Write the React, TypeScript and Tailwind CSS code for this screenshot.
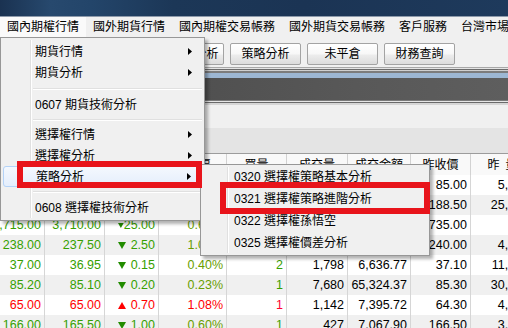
import React from "react";

const menus = ["國內期權行情", "國外期貨行情", "國內期權交易帳務", "國外期貨交易帳務", "客戶服務", "台灣市場"];

const widths = ["w-[45px]", "w-[60px]", "w-[54px]", "w-[68px]", "w-[60px]", "w-[61px]", "w-[63px]", "w-[60px]", "w-[62px]"];
const headers = ["買價", "賣價", "漲跌", "漲跌幅", "買量", "成交量", "成交金額", "昨收價", ""];

type Row = { c: string[]; up: boolean; qUp: boolean };
const rows: Row[] = [
  { c: ["84.90", "84.80", "0.10", "0.12%", "3", "2,311", "19,611.42", "85.00", "5,862"], up: false, qUp: false },
  { c: ["188.00", "187.50", "0.50", "0.27%", "1", "985", "18,512.30", "188.50", "25,417"], up: false, qUp: false },
  { c: ["3,715.00", "3,710.00", "25.00", "0.67%", "1", "312", "11,602.73", "3,735.00", ""], up: false, qUp: false },
  { c: ["238.00", "237.50", "2.50", "1.04%", "2", "530", "12,611.95", "240.00", "4,310"], up: false, qUp: false },
  { c: ["37.00", "36.95", "0.15", "0.40%", "2", "1,798", "6,636.77", "37.10", "11,526"], up: false, qUp: false },
  { c: ["85.20", "85.10", "0.20", "0.23%", "1", "7,680", "65,324.37", "85.30", "30,884"], up: false, qUp: false },
  { c: ["65.00", "65.00", "0.70", "1.08%", "1", "1,142", "7,395.72", "64.30", "4,205"], up: true, qUp: true },
  { c: ["166.00", "165.50", "1.00", "0.60%", "1", "427", "7,067.90", "166.50", "3,164"], up: false, qUp: false },
];

function Arrow() {
  return (
    <svg width="5" height="7" viewBox="0 0 5 7" className="ml-auto mr-[9px]">
      <polygon points="0,0 4,3.5 0,7" fill="#000" />
    </svg>
  );
}

function MenuItem({ label, arrow, hot }: { label: string; arrow?: boolean; hot?: boolean }) {
  return (
    <div
      className={
        "flex h-[21px] items-center pl-[32px] text-[12px] leading-none whitespace-nowrap " +
        (hot ? "rounded-[3px] border border-[#b4d3f8] bg-[linear-gradient(#f4f8fe,#e4eefc)] pl-[31px]" : "")
      }
    >
      <span>{label}</span>
      {arrow && <Arrow />}
    </div>
  );
}

function Sep({ h }: { h: string }) {
  return (
    <div className={"flex flex-col justify-center " + h}>
      <div className="ml-[30px] h-px bg-[#e0e0e0]" />
      <div className="ml-[30px] h-px bg-white" />
    </div>
  );
}

function Tri({ up }: { up: boolean }) {
  return (
    <svg width="8" height="7" viewBox="0 0 8 7">
      {up ? <polygon points="4,0 8,7 0,7" fill="#ff0000" /> : <polygon points="0,0 8,0 4,7" fill="#228c00" />}
    </svg>
  );
}

export default function App() {
  return (
    <div className="relative h-[328px] w-[508px] overflow-hidden bg-[#f0f0f0] font-['Liberation_Sans','Noto_Sans_CJK_TC',sans-serif] text-black">
      {/* title bar */}
      <div className="h-[16px] bg-[linear-gradient(90deg,#1a3251,#27496e_10%,#23456a_18%,#1c3757_34%,#1b3454_60%,#1e3a5c)]" />
      <div className="h-px bg-[#8d9aab]" />

      {/* menu bar */}
      <div className="flex h-[20px] overflow-hidden bg-[#f0f0f0] text-[12px] leading-none">
        {menus.map((m, i) => (
          <div
            key={m}
            className={"flex h-full shrink-0 items-center whitespace-nowrap px-[7px] " + (i === 0 ? "bg-[#fafafa]" : "")}
          >
            {m}
          </div>
        ))}
      </div>

      {/* toolbar */}
      <div className="flex h-[30px] items-start gap-[6px] pt-[6px] text-[12px] leading-none">
        {["期貨下單", "選擇權下單", "選擇權分析", "策略分析", "未平倉", "財務查詢"].map((b, i) => (
          <div
            key={b}
            className={
              "flex h-[22px] shrink-0 items-center justify-center whitespace-nowrap rounded-[2px] border border-[#a3a3a3] bg-[linear-gradient(#ffffff,#f7f7f7_50%,#ececec_55%,#dcdcdc)] " +
              (i === 0 ? "w-[70px]" : "w-[71px]")
            }
          >
            {b}
          </div>
        ))}
      </div>

      {/* stripes */}
      <div className="h-px bg-[#a8a8a8]" />
      <div className="h-px bg-[#e4e4e4]" />
      <div className="h-px bg-[#6c6c6c]" />
      <div className="h-px bg-[#cfcfcf]" />
      <div className="h-[2px] bg-[#7c7c7c]" />
      <div className="h-[5px] bg-[#9db7d3]" />
      <div className="h-[22px] bg-[linear-gradient(90deg,#454545,#4f4f4f_35%,#585858_70%,#5e5e5e)]" />
      <div className="h-px bg-[#7a7a7a]" />
      <div className="h-px bg-[#e6e6e6]" />
      <div className="h-px bg-[#6a6a6a]" />
      <div className="h-[2px] bg-[#d6d6d6]" />

      <div className="h-[23px] bg-[#f0f0f0]" />
      <div className="h-[25px] bg-[#e4e4e4]" />

      {/* table header */}
      <div className="flex h-[22px] border-t border-[#9c9c9c] bg-[#f9f9f9] text-[12px] leading-none">
        {headers.map((h, i) => (
          <div
            key={i}
            className={"flex shrink-0 items-center justify-center border-r border-[#d2d2d2] whitespace-nowrap " + widths[i]}
          >
            {i === 8 ? (
              <span className="ml-[2px]">
                昨<span className="ml-[6px]">量</span>
              </span>
            ) : (
              h
            )}
          </div>
        ))}
      </div>

      {/* rows */}
      {rows.map((r, ri) => {
        const dir = r.up ? "text-[#ff0000]" : "text-[#36a000]";
        const pct = r.up ? "text-[#ff0000]" : "text-[#6a9e00]";
        const q = r.qUp ? "text-[#ff0030]" : "text-[#36a000]";
        return (
          <div key={ri} className={"flex h-[20px] text-[12.5px] leading-none " + (ri % 2 === 0 ? "bg-white" : "bg-[#f0f0f0]")}>
            {r.c.map((v, ci) => {
              const color = ci === 0 || ci === 1 ? dir : ci === 3 ? pct : ci === 4 ? q : "text-black";
              if (ci === 2) {
                return (
                  <div
                    key={ci}
                    className={"flex shrink-0 items-center border-r border-[#d6d6d6] pl-[13px] pr-[3px] " + widths[ci] + " " + dir}
                  >
                    <Tri up={r.up} />
                    <span className="ml-auto">{v}</span>
                  </div>
                );
              }
              return (
                <div
                  key={ci}
                  className={
                    "flex shrink-0 items-center justify-end overflow-hidden whitespace-nowrap border-r border-[#d6d6d6] pr-[3px] " +
                    widths[ci] +
                    " " +
                    color
                  }
                >
                  <span className="shrink-0">{v}</span>
                </div>
              );
            })}
          </div>
        );
      })}

      {/* main dropdown */}
      <div className="absolute left-0 top-[37px] h-[184px] w-[205px] border border-[#979797] bg-[#f0f0f0] px-[2px] pt-[3px] shadow-[3px_3px_3px_rgba(0,0,0,0.3)]">
        <div className="absolute bottom-[2px] left-[29px] top-[2px] w-[2px] border-l border-r border-l-[#e0e0e0] border-r-white" />
        <div className="relative">
          <MenuItem label="期貨行情" arrow />
          <MenuItem label="期貨分析" arrow />
          <Sep h="h-[11px]" />
          <MenuItem label="0607 期貨技術分析" />
          <Sep h="h-[9px]" />
          <MenuItem label="選擇權行情" arrow />
          <MenuItem label="選擇權分析" arrow />
          <MenuItem label="策略分析" arrow hot />
          <Sep h="h-[10px]" />
          <MenuItem label="0608 選擇權技術分析" />
        </div>
      </div>

      {/* submenu */}
      <div className="absolute left-[200px] top-[164px] h-[92px] w-[230px] border border-[#979797] bg-[#f0f0f0] p-px shadow-[3px_3px_3px_rgba(0,0,0,0.3)]">
        <div className="absolute bottom-[2px] left-[26px] top-[2px] w-[2px] border-l border-r border-l-[#e0e0e0] border-r-white" />
        <div className="relative">
          {["0320 選擇權策略基本分析", "0321 選擇權策略進階分析", "0322 選擇權孫悟空", "0325 選擇權價差分析"].map((s) => (
            <div key={s} className="flex h-[22px] items-center whitespace-nowrap pl-[32px] text-[12px] leading-none">
              {s}
            </div>
          ))}
        </div>
      </div>

      {/* red highlight boxes */}
      <div className="absolute left-[17px] top-[161px] h-[27px] w-[185px] border-[6px] border-[#e8141b]" />
      <div className="absolute left-[220px] top-[182px] h-[32px] w-[210px] border-[6px] border-[#e8141b]" />
    </div>
  );
}
